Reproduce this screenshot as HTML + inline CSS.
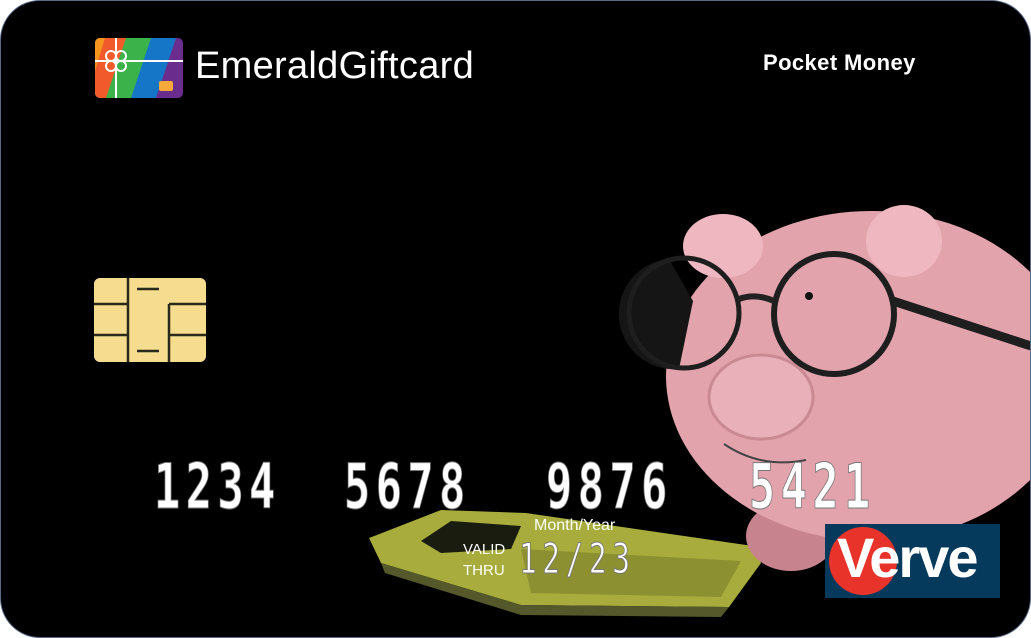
<!DOCTYPE html>
<html><head><meta charset="utf-8"><style>
html,body{margin:0;padding:0;background:#fff;}
.card{position:absolute;left:0;top:0;width:1029px;height:636px;background:#000;border-radius:40px;border:1px solid #5a6a8a;overflow:hidden;}
.t{position:absolute;color:#fff;font-family:"Liberation Sans",sans-serif;white-space:nowrap;}
.num{position:absolute;top:450px;color:#fff;font-family:"DejaVu Sans Mono","Liberation Mono",monospace;font-weight:bold;font-size:62px;line-height:72px;transform:scaleX(0.7);transform-origin:0 0;letter-spacing:8px;-webkit-text-stroke:1px #777;}
</style></head><body>
<div class="card">
<svg width="1031" height="638" style="position:absolute;left:0;top:0">
  <polygon points="368,537 440,509 525,512 752,545 760,562 728,606 520,604 380,562" fill="#a8ac3c"/>
  <polygon points="420,540 450,520 520,525 510,548 440,552" fill="#1a1c10"/>
  <polygon points="520,548 740,560 720,596 530,592" fill="#8c9030"/>
  <polygon points="380,562 520,604 728,606 720,616 520,614 384,572" fill="#55582a"/>
  <ellipse cx="790" cy="535" rx="45" ry="35" fill="#c8848e"/>
  <ellipse cx="930" cy="555" rx="50" ry="40" fill="#c07e88"/>
  <ellipse cx="870" cy="375" rx="205" ry="165" fill="#e2a3ad"/>
  <ellipse cx="722" cy="245" rx="40" ry="32" fill="#efb8c0"/>
  <ellipse cx="903" cy="240" rx="38" ry="36" fill="#efb8c0"/>
  <ellipse cx="760" cy="396" rx="52" ry="42" fill="#eab0b9" stroke="#c98a94" stroke-width="3"/>
  <path d="M723 443 Q760 468 805 459" stroke="#444" stroke-width="2" fill="none"/>
  <path d="M668 258 A55 55 0 0 0 678 368 L692 300 Z" fill="#151515"/>
  <circle cx="683" cy="312" r="55" fill="none" stroke="#1e1e1e" stroke-width="5"/>
  <circle cx="833" cy="313" r="60" fill="none" stroke="#1e1e1e" stroke-width="6"/>
  <path d="M738 298 Q755 292 773 300" stroke="#222" stroke-width="6" fill="none"/>
  <path d="M892 300 L1030 345" stroke="#1e1e1e" stroke-width="9"/>
  <circle cx="808" cy="295" r="4" fill="#111"/>
  <rect x="93" y="277" width="112" height="84" rx="6" fill="#f5dc8e"/>
  <g stroke="#2a2a1a" stroke-width="2.5" fill="none">
    <path d="M127 277 V361 M93 303 H127 M93 334 H127 M168 303 V361 M168 303 H205 M168 334 H205 M136 288 H158 M136 350 H158"/>
  </g>
  <defs><clipPath id="lc"><rect x="94" y="37" width="88" height="60" rx="5"/></clipPath></defs>
  <g clip-path="url(#lc)">
    <rect x="94" y="37" width="88" height="60" fill="#6a2d8e"/>
    <polygon points="94,37 175,37 155,97 94,97" fill="#1575c6"/>
    <polygon points="94,37 150,37 130,97 94,97" fill="#3bb24a"/>
    <polygon points="94,37 125,37 105,97 94,97" fill="#f15a2a"/>
    <polygon points="94,37 104,37 94,70" fill="#f7941e"/>
    <line x1="94" y1="60" x2="182" y2="60" stroke="#fff" stroke-width="2"/>
    <line x1="115" y1="37" x2="115" y2="97" stroke="#fff" stroke-width="2"/>
    <circle cx="110" cy="55" r="5" fill="none" stroke="#fff" stroke-width="2"/>
    <circle cx="120" cy="55" r="5" fill="none" stroke="#fff" stroke-width="2"/>
    <circle cx="110" cy="65" r="5" fill="none" stroke="#fff" stroke-width="2"/>
    <circle cx="120" cy="65" r="5" fill="none" stroke="#fff" stroke-width="2"/>
    <rect x="158" y="80" width="14" height="10" rx="2" fill="#f4a93a"/>
  </g>
  <rect x="824" y="523" width="175" height="74" fill="#063a5c"/>
  <circle cx="862" cy="560" r="34" fill="#e8332a"/>
</svg>
<div class="t" style="left:194px;top:44px;font-size:38px;letter-spacing:0.3px;">EmeraldGiftcard</div>
<div class="t" style="left:762px;top:49px;font-size:22px;font-weight:bold;letter-spacing:0.4px;">Pocket Money</div>
<div class="num" style="left:153px;">1234</div>
<div class="num" style="left:343px;">5678</div>
<div class="num" style="left:545px;">9876</div>
<div class="num" style="left:748px;">5421</div>
<div class="t" style="left:533px;top:516px;font-size:16px;">Month/Year</div>
<div class="t" style="left:462px;top:538px;font-size:15px;line-height:21px;">VALID<br>THRU</div>
<div class="num" style="left:518px;top:533px;font-size:42px;line-height:50px;font-weight:normal;letter-spacing:8px;">12/23</div>
<div class="t" style="left:836px;top:524px;font-size:56px;font-weight:bold;letter-spacing:-2px;">Verve</div>
</div>
</body></html>
